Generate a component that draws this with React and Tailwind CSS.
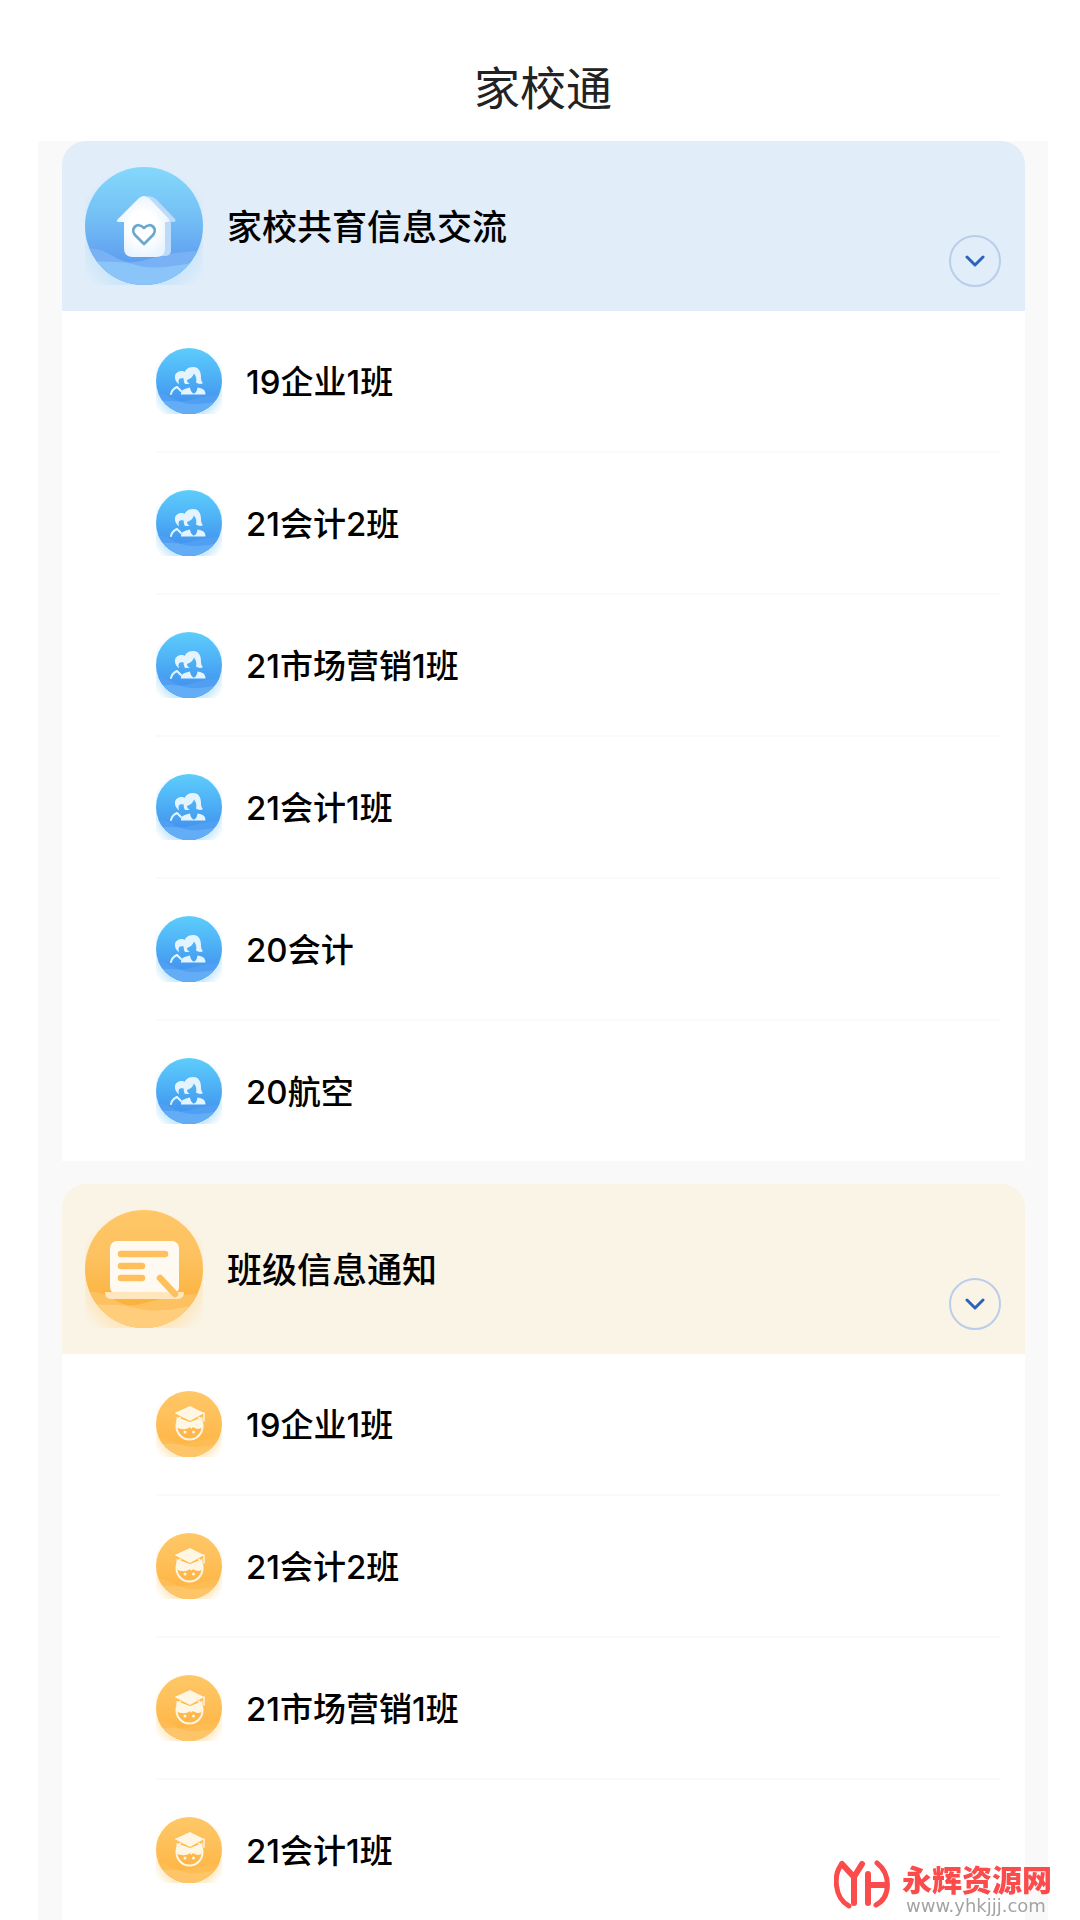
import React from "react";

const classes = ["19企业1班", "21会计2班", "21市场营销1班", "21会计1班", "20会计", "20航空"];

function Disc({ id, size, top, middle, bottom, glow, wave, base, children, className }) {
  return (
    <svg viewBox={`0 0 ${size} ${size}`} className={className} aria-hidden="true">
      <defs>
        <linearGradient id={`${id}-fill`} x1="0" y1="0" x2="0" y2="1">
          <stop offset="0" stopColor={top} />
          <stop offset="0.4" stopColor={middle} />
          <stop offset="0.8" stopColor={bottom} />
        </linearGradient>
        <radialGradient id={`${id}-glow`} cx="0.5" cy="0.5" r="0.5">
          <stop offset="0.75" stopColor={glow} stopOpacity="0.6" />
          <stop offset="1" stopColor={glow} stopOpacity="0" />
        </radialGradient>
        <clipPath id={`${id}-clip`}>
          <circle cx={size / 2} cy={size / 2} r={size / 2} />
        </clipPath>
      </defs>
      <circle cx={size / 2} cy={size * 0.58} r={size * 0.6} fill={`url(#${id}-glow)`} />
      <g clipPath={`url(#${id}-clip)`}>
        <rect width={size} height={size} fill={`url(#${id}-fill)`} />
        <g transform={`scale(${size / 118})`}>
          <path d="M0 82C18 79 28 92 42 95C60 97 75 84 118 84V118H0Z" fill={wave} />
          <path d="M0 93C22 97 34 92 54 99C75 103 95 98 118 94V118H0Z" fill={base} />
        </g>
      </g>
      {children}
    </svg>
  );
}

function HouseIcon() {
  return (
    <Disc id="house" size={118} top="#84d8fc" middle="#75c1f5" bottom="#5f9ff0" glow="#bfe2fb" wave="#78b2f5" base="#8bc4f8" className="size-[118px] shrink-0">
      <defs>
        <radialGradient id="house-white">
          <stop offset="0.5" stopColor="#ffffff" />
          <stop offset="1" stopColor="#eaf4fe" />
        </radialGradient>
      </defs>
      <path d="M61 30Q66 28 71 32L90 52Q92 55 88 55H86V83Q86 89 80 89H70Z" fill="#bcdafa" />
      <path d="M54 31Q59 27 64 31L84 52Q86 55 82 55H80V81Q80 90 71 90H48Q39 90 39 81V55H34Q30 55 33 52Z" fill="url(#house-white)" />
      <path d="M59 77L50 68C45 62 52 54 59 61C66 54 73 62 68 68Z" fill="none" stroke="#6aa9cf" strokeWidth="2.8" strokeLinejoin="round" />
    </Disc>
  );
}

function BoardIcon() {
  return (
    <Disc id="board" size={118} top="#ffc768" middle="#fdc160" bottom="#fbb23c" glow="#fde0ac" wave="#fdc162" base="#ffcd7c" className="size-[118px] shrink-0">
      <rect x="25" y="31" width="69" height="53" rx="7" fill="#fffaf1" />
      <path d="M20 82H99Q99 89 93 89H26Q20 89 20 82Z" fill="#ffe6bd" />
      <g stroke="#fdc05c" strokeWidth="6.5" strokeLinecap="round">
        <path d="M36 44H80" />
        <path d="M36 56H57" />
        <path d="M36 68H57" />
        <path d="M75 68L90 84" />
      </g>
    </Disc>
  );
}

function ParentsIcon({ id }) {
  return (
    <Disc id={id} size={66} top="#5dcdfb" middle="#4fb3f6" bottom="#4396ef" glow="#a8dcfb" wave="#519ff2" base="#62adf5" className="size-[66px] shrink-0">
      <g fill="#e4f4fe">
        <path d="M28 28C28 22 32 19 37 19C43 19 45 24 45 29C45 32 45.500 34 47 35C45 36.500 42 36 40 34.500C41 31 40 28 38 25.500C37 29 34 31 31 32C31 33.500 32 35 34 36H29C27.500 34 27.500 31 28 28Z" />
        <path d="M30 25C27 21.500 20 23 19 28C18.500 31 20 34 23 36.500C22.500 33.500 22 31.500 24 30.500C26 30 27.500 30 29 31Z" />
        <path d="M25 46.500C25 42.500 27 41 32 40L34 39.500C34.500 43 36.500 45.500 38 45.500C39.500 45.500 41 43 41.500 39.500L44 40C48 41 49.500 43 49.500 46.500Z" />
      </g>
      <path d="M15 46C15.500 42 18 40.500 21 39L25 43" fill="none" stroke="#e4f4fe" strokeWidth="2" strokeLinecap="round" strokeLinejoin="round" />
    </Disc>
  );
}

function PupilIcon({ id }) {
  return (
    <Disc id={id} size={66} top="#ffc767" middle="#fec05a" bottom="#feb646" glow="#fee0ab" wave="#febd54" base="#fec568" className="size-[66px] shrink-0">
      <circle cx="33.500" cy="35.500" r="13" fill="#feb748" stroke="#fff6e3" strokeWidth="2" />
      <path d="M20.500 36V26L34 31L46.500 26V36C44 39 39 38 37 36L35 38L34 36C31 39 24 39 20.500 36Z" fill="#fff6e3" />
      <circle cx="29" cy="41" r="1.500" fill="#fff6e3" />
      <circle cx="37.500" cy="41" r="1.500" fill="#fff6e3" />
      <path d="M17.500 22L34 14.500L49 22L34 30.500Z" fill="#fff6e3" stroke="#feb748" strokeWidth="0.800" strokeLinejoin="round" />
      <path d="M48 22V30" stroke="#fff6e3" strokeWidth="1.500" strokeLinecap="round" />
    </Disc>
  );
}

function Section({ title, icon, tone, items, ItemIcon, name }) {
  return (
    <section>
      <header className={`flex items-center rounded-t-3xl py-6 pr-6 pl-[23px] ${tone}`}>
        <div className="flex h-[122px] flex-1 items-center gap-6">
          {icon}
          <h2 className="pt-0.5 text-[35px] leading-[48px] font-medium">{title}</h2>
        </div>
        <button type="button" aria-label={`展开${title}`} className="flex size-[52px] items-center justify-center self-end rounded-full border-2 border-[#bacdea]">
          <svg viewBox="0 0 20 12" className="h-3 w-5" fill="none" stroke="#2a62be" strokeWidth="3" strokeLinecap="round" strokeLinejoin="round" aria-hidden="true">
            <path d="M2 2L10 10L18 2" />
          </svg>
        </button>
      </header>
      <ul className="bg-white pr-6 pl-[94px]">
        {items.map((label, i) => (
          <li key={label} className="border-b-2 border-[#fafafa] last:border-b-0">
            <a href="#" className="flex h-[140px] items-center gap-6">
              <ItemIcon id={`${name}-${i}`} />
              <span className="pt-0.5 text-[33px] leading-[44px] font-medium">{label}</span>
            </a>
          </li>
        ))}
      </ul>
    </section>
  );
}

function Watermark() {
  return (
    <div className="fixed right-7 bottom-0 flex h-[62px] items-start gap-3">
      <svg viewBox="0 0 56 50" className="mt-0.5 h-[50px] w-14" fill="none" stroke="#fb4b4b" strokeLinecap="round" strokeLinejoin="round" aria-hidden="true">
        <path d="M8 4C-1 14 0 38 15 46" strokeWidth="5" />
        <path d="M8 4L20 17L28 4M20 17V43" strokeWidth="6" />
        <path d="M34 14V43M34 25H50" strokeWidth="6" />
        <path d="M43 3C57 14 57 37 42 45" strokeWidth="5" />
      </svg>
      <div className="flex flex-col pt-1">
        <span className="text-[30px] leading-9 font-black text-[#fb4b4b]">永辉资源网</span>
        <span className="pl-1 font-['DejaVu_Sans',sans-serif] text-[18px] leading-4 text-[#a3a3a3]">www.yhkjjj.com</span>
      </div>
    </div>
  );
}

export default function App() {
  return (
    <div className="min-h-screen bg-white font-['Inter','Noto_Sans_CJK_SC',sans-serif] text-black">
      <header className="flex h-[141px] items-center justify-center pt-7 pl-1.5">
        <h1 className="font-['Noto_Sans_CJK_SC',sans-serif] text-[46px] leading-[60px] font-normal text-[#222222]">家校通</h1>
      </header>
      <main className="mr-8 ml-[38px] flex flex-col gap-[23px] bg-[#f9f9f9] pr-[23px] pl-6">
        <Section name="parents" title="家校共育信息交流" tone="bg-[#e1edf9]" icon={<HouseIcon />} items={classes} ItemIcon={ParentsIcon} />
        <Section name="pupils" title="班级信息通知" tone="bg-[#faf4e6]" icon={<BoardIcon />} items={classes.slice(0, 4)} ItemIcon={PupilIcon} />
      </main>
      <Watermark />
    </div>
  );
}
